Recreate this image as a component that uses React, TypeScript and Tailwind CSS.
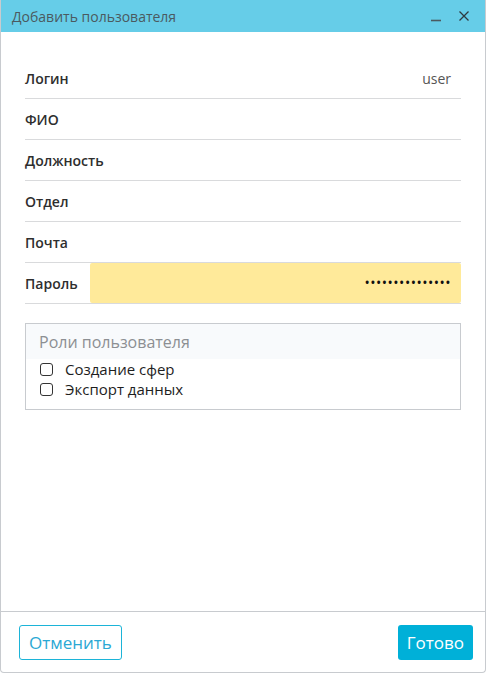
import React from "react";

const rows = [
  { label: "Логин", value: "user" },
  { label: "ФИО", value: "" },
  { label: "Должность", value: "" },
  { label: "Отдел", value: "" },
  { label: "Почта", value: "" },
];

export default function App() {
  return (
    <div
      className="w-[486px] h-[673px] flex flex-col bg-white border border-t-0 border-[#c8cbcf] rounded-b-[4px] overflow-hidden"
      style={{ fontFamily: '"Open Sans", "Noto Sans", sans-serif' }}
    >
      {/* заголовок */}
      <div className="h-[32px] shrink-0 bg-[#66cde8] flex items-center pl-[11px] pr-[15px]">
        <span className="text-[14px] text-[#4b5a60]">Добавить пользователя</span>
        <div className="ml-auto flex items-center gap-[16px]">
          <svg width="12" height="12" viewBox="0 0 12 12">
            <path d="M1 10.5h10" stroke="#4b5a60" strokeWidth="1.6" />
          </svg>
          <svg width="12" height="12" viewBox="0 0 12 12">
            <path d="M1.5 1.5l9 9M10.5 1.5l-9 9" stroke="#2f3b40" strokeWidth="1.3" />
          </svg>
        </div>
      </div>

      {/* форма */}
      <div className="flex-1 pt-[26px] pl-[24px] pr-[24px]">
        {rows.map((r) => (
          <div
            key={r.label}
            className="h-[41px] flex items-center border-b border-[#d9dadc]"
          >
            <span className="text-[14px] font-semibold text-[#2e2e2e]">{r.label}</span>
            <span className="ml-auto pr-[10px] text-[14px] text-[#555]">{r.value}</span>
          </div>
        ))}
        <div className="h-[41px] flex items-stretch border-b border-[#d9dadc]">
          <span className="w-[65px] flex items-center text-[14px] font-semibold text-[#2e2e2e]">
            Пароль
          </span>
          <div className="flex-1 bg-[#ffea9a] rounded-[2px] flex items-center justify-end pr-[10px]">
            <span className="text-[14px] tracking-[0.5px] text-[#111] leading-none">
              •••••••••••••••
            </span>
          </div>
        </div>

        <div className="mt-[19px] border border-[#c8cbcf]">
          <div className="h-[35px] bg-[#f8fafc] flex items-center pl-[13px] text-[16px] text-[#8c8f93]">
            Роли пользователя
          </div>
          <div className="pl-[14px] pb-[10px] flex flex-col">
            {["Создание сфер", "Экспорт данных"].map((t) => (
              <label key={t} className="flex items-center h-[20px]">
                <span className="w-[13px] h-[13px] border border-[#333] rounded-[3px]" />
                <span className="ml-[12px] text-[15px] text-[#1e1e1e]">{t}</span>
              </label>
            ))}
          </div>
        </div>
      </div>

      {/* кнопки */}
      <div className="h-[61px] shrink-0 border-t border-[#c8cbcf] flex items-start justify-between pt-[13px] pl-[18px] pr-[12px]">
        <button className="h-[35px] px-[9px] border border-[#1cb4d8] rounded-[3px] text-[17px] text-[#2ba8d4]">
          Отменить
        </button>
        <button className="h-[35px] px-[9px] bg-[#00b0d8] rounded-[3px] text-[17px] text-white">
          Готово
        </button>
      </div>
    </div>
  );
}
